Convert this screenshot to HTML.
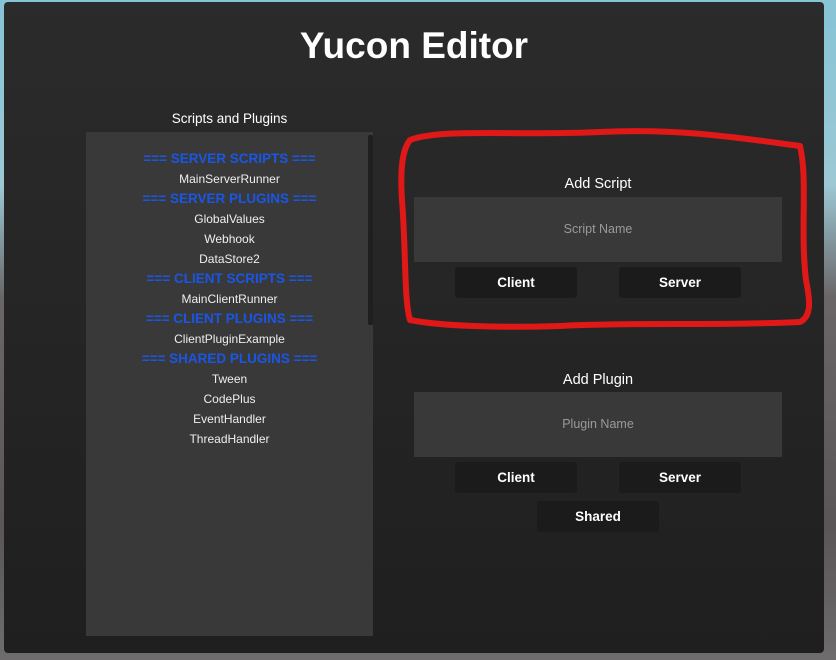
<!DOCTYPE html>
<html><head><meta charset="utf-8"><style>
*{margin:0;padding:0;box-sizing:border-box}
body{width:836px;height:660px;overflow:hidden;position:relative;font-family:"Liberation Sans",sans-serif;
background:linear-gradient(180deg,#86c4d6 0%,#9cc8d4 28%,#6a6668 45%,#5a5658 80%,#6e6c6c 100%)}
.panel{position:absolute;left:4px;top:2px;width:820px;height:651px;border-radius:4px;background:linear-gradient(180deg,#2b2b2b,#1f1f1f)}
.t{position:absolute;color:#fff;text-align:center;white-space:nowrap}
.title{left:0;width:828px;top:25px;font-size:37px;font-weight:bold;letter-spacing:0}
.list{position:absolute;left:86px;top:132px;width:287px;height:504px;background:#393939}
.sb{position:absolute;left:368px;top:135px;width:5px;height:190px;background:#1f1f1f;border-radius:2px}
.item{position:absolute;left:86px;width:287px;text-align:center;font-size:12px;color:#eee}
.h{color:#1a56e6;font-weight:bold;font-size:13.5px}
.inp{position:absolute;left:414px;width:368px;height:65px;background:#393939;color:#9a9a9a;font-size:12.5px;text-align:center;line-height:65px}
.btn{position:absolute;width:122px;height:31px;background:#1b1b1b;border-radius:3px;color:#fff;font-weight:bold;font-size:13.5px;text-align:center;line-height:31px}
.lbl{position:absolute;left:414px;width:368px;text-align:center;color:#fff;font-size:14.5px}
</style></head><body>
<div class="panel"></div>
<div class="t title">Yucon Editor</div>
<div class="t" style="left:86px;width:287px;top:111px;font-size:13.5px">Scripts and Plugins</div>
<div class="list"></div><div class="sb"></div>
<div class="item h" style="top:151px">=== SERVER SCRIPTS ===</div>
<div class="item" style="top:172px">MainServerRunner</div>
<div class="item h" style="top:191px">=== SERVER PLUGINS ===</div>
<div class="item" style="top:212px">GlobalValues</div>
<div class="item" style="top:232px">Webhook</div>
<div class="item" style="top:252px">DataStore2</div>
<div class="item h" style="top:271px">=== CLIENT SCRIPTS ===</div>
<div class="item" style="top:292px">MainClientRunner</div>
<div class="item h" style="top:311px">=== CLIENT PLUGINS ===</div>
<div class="item" style="top:332px">ClientPluginExample</div>
<div class="item h" style="top:351px">=== SHARED PLUGINS ===</div>
<div class="item" style="top:372px">Tween</div>
<div class="item" style="top:392px">CodePlus</div>
<div class="item" style="top:412px">EventHandler</div>
<div class="item" style="top:432px">ThreadHandler</div>

<div class="lbl" style="top:176px">Add Script</div>
<div class="inp" style="top:197px">Script Name</div>
<div class="btn" style="left:455px;top:267px">Client</div>
<div class="btn" style="left:619px;top:267px">Server</div>

<div class="lbl" style="top:372px">Add Plugin</div>
<div class="inp" style="top:392px">Plugin Name</div>
<div class="btn" style="left:455px;top:462px">Client</div>
<div class="btn" style="left:619px;top:462px">Server</div>
<div class="btn" style="left:537px;top:501px">Shared</div>

<svg style="position:absolute;left:0;top:0" width="836" height="660">
<path d="M410 140 C440 128 520 136 600 132 C680 128 740 138 800 146 C808 180 800 230 806 280 C810 300 812 316 800 322 C720 326 640 322 560 326 C500 328 440 326 410 320 C404 300 406 250 402 200 C400 170 402 150 410 140 Z" fill="none" stroke="#e01818" stroke-width="6" stroke-linejoin="round"/>
</svg>
</body></html>
